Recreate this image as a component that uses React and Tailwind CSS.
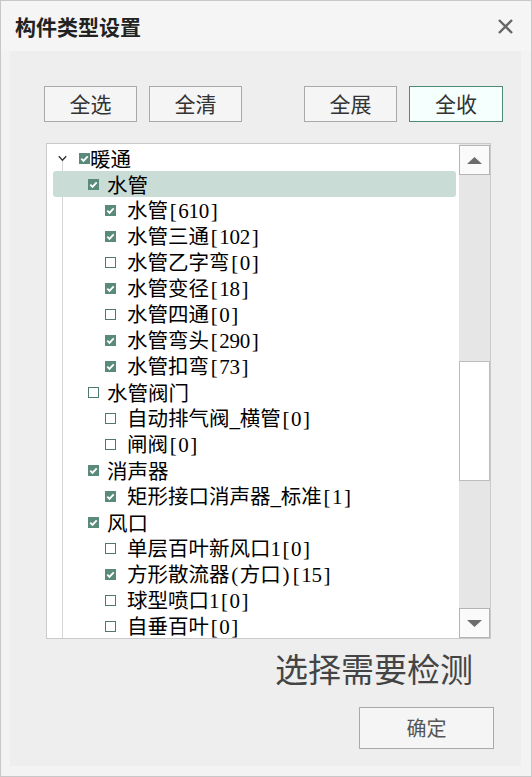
import React from "react";

const rows = [
  { level: 0, text: "暖通", checked: true },
  { level: 1, text: "水管", checked: true, selected: true },
  { level: 2, text: "水管[610]", checked: true },
  { level: 2, text: "水管三通[102]", checked: true },
  { level: 2, text: "水管乙字弯[0]", checked: false },
  { level: 2, text: "水管变径[18]", checked: true },
  { level: 2, text: "水管四通[0]", checked: false },
  { level: 2, text: "水管弯头[290]", checked: true },
  { level: 2, text: "水管扣弯[73]", checked: true },
  { level: 1, text: "水管阀门", checked: false },
  { level: 2, text: "自动排气阀_横管[0]", checked: false },
  { level: 2, text: "闸阀[0]", checked: false },
  { level: 1, text: "消声器", checked: true },
  { level: 2, text: "矩形接口消声器_标准[1]", checked: true },
  { level: 1, text: "风口", checked: true },
  { level: 2, text: "单层百叶新风口1[0]", checked: false },
  { level: 2, text: "方形散流器(方口)[15]", checked: true },
  { level: 2, text: "球型喷口1[0]", checked: false },
  { level: 2, text: "自垂百叶[0]", checked: false },
];

function Label({ text }) {
  const chars = Array.from(text);
  return (
    <span className="whitespace-nowrap text-[20.5px] leading-[26px] text-black font-['Noto_Sans_CJK_SC',sans-serif]">
      {chars.map((c, i) =>
        c.charCodeAt(0) < 128 ? (
          <span
            key={i}
            className="inline-block w-[10.25px] text-center font-['Liberation_Serif',serif] text-[21px]"
          >
            {c}
          </span>
        ) : (
          <span key={i}>{c}</span>
        )
      )}
    </span>
  );
}

function Check({ checked }) {
  if (checked) {
    return (
      <span className="flex h-[11px] w-[11px] shrink-0 items-center justify-center bg-[#5a8a79]">
        <svg width="11" height="11" viewBox="0 0 11 11">
          <path d="M2.3 5.6 L4.5 7.8 L8.7 3.3" fill="none" stroke="#ffffff" strokeWidth="1.9" />
        </svg>
      </span>
    );
  }
  return <span className="h-[11px] w-[11px] shrink-0 border border-[#4f7a6b] bg-white" />;
}

function Row({ r }) {
  if (r.level === 0) {
    return (
      <div className="relative flex h-[26px] items-center pl-[11px]">
        <svg width="9" height="7" viewBox="0 0 9 7" className="shrink-0">
          <path d="M0.8 1.2 L4.5 5.2 L8.2 1.2" fill="none" stroke="#333333" strokeWidth="1.4" />
        </svg>
        <span className="ml-[12px] flex">
          <Check checked={r.checked} />
        </span>
        <span className="ml-[0px]">
          <Label text={r.text} />
        </span>
      </div>
    );
  }
  if (r.level === 1) {
    return (
      <div
        className={
          r.selected
            ? "relative ml-[6px] mr-[3px] flex h-[26px] items-center rounded-[3px] bg-[#c9dcd6] pl-[35px]"
            : "relative flex h-[26px] items-center pl-[41px]"
        }
      >
        <Check checked={r.checked} />
        <span className="ml-[8px]">
          <Label text={r.text} />
        </span>
      </div>
    );
  }
  return (
    <div className="relative flex h-[26px] items-center pl-[58px]">
      <Check checked={r.checked} />
      <span className="ml-[11px]">
        <Label text={r.text} />
      </span>
    </div>
  );
}

function Btn({ children, active, className }) {
  return (
    <div
      className={
        "flex h-[36px] items-center justify-center border text-[21px] text-[#333] font-['Noto_Sans_CJK_SC',sans-serif] " +
        (active ? "border-[#4e8a76] bg-[#f5fffd] " : "border-[#a9a9a9] bg-[#f5f5f5] ") +
        className
      }
    >
      {children}
    </div>
  );
}

export default function App() {
  return (
    <div className="flex h-[777px] w-[532px] flex-col border border-[#c8c8c8] bg-[#f3f3f3] font-['Noto_Sans_CJK_SC',sans-serif]">
      <div className="flex h-[50px] shrink-0 items-center justify-between bg-[#f5f5f5] pl-[14px] pr-[18px]">
        <span className="text-[21px] font-bold text-[#222] leading-none">构件类型设置</span>
        <svg width="15" height="15" viewBox="0 0 15 15">
          <path d="M1 1 L14 14 M14 1 L1 14" stroke="#666666" strokeWidth="2.4" />
        </svg>
      </div>
      <div className="ml-[9px] flex h-[715px] w-[511px] flex-col items-start bg-[#eeeeee]">
        <div className="ml-[34px] mt-[35px] flex">
          <Btn className="w-[93px]">全选</Btn>
          <Btn className="ml-[12px] w-[93px]">全清</Btn>
          <Btn className="ml-[62px] w-[93px]">全展</Btn>
          <Btn active className="ml-[12px] w-[94px]">全收</Btn>
        </div>
        <div className="ml-[36px] mt-[21px] flex h-[496px] w-[445px] border border-[#cacaca] bg-white">
          <div className="relative flex-1 overflow-hidden pt-[1px]">
            <div className="absolute left-[15px] top-[17px] bottom-0 w-px bg-[#d6d6d6]" />
            {rows.map((r, i) => (
              <Row key={i} r={r} />
            ))}
          </div>
          <div className="flex w-[31px] flex-col bg-[#e6e6e6]">
            <div className="mt-[1px] flex h-[30px] items-center justify-center border border-[#b4b4b4] bg-[#fafafa]">
              <svg width="15" height="7" viewBox="0 0 15 7">
                <path d="M7.5 0 L15 7 L0 7 Z" fill="#6b6b6b" />
              </svg>
            </div>
            <div className="mt-[186px] h-[120px] border border-[#bdbdbd] bg-white" />
            <div className="flex-1" />
            <div className="flex h-[30px] items-center justify-center border border-[#b4b4b4] bg-[#fafafa]">
              <svg width="15" height="7" viewBox="0 0 15 7">
                <path d="M0 0 L15 0 L7.5 7 Z" fill="#6b6b6b" />
              </svg>
            </div>
          </div>
        </div>
        <div className="ml-[265px] mt-[13px] h-[32px] text-[33px] leading-[32px] text-[#444] whitespace-nowrap">
          选择需要检测
        </div>
        <div className="ml-[349px] mt-[23px] flex h-[42px] w-[135px] items-center justify-center border border-[#a9a9a9] bg-[#f5f5f5] text-[20px] text-[#555]">
          确定
        </div>
      </div>
    </div>
  );
}
